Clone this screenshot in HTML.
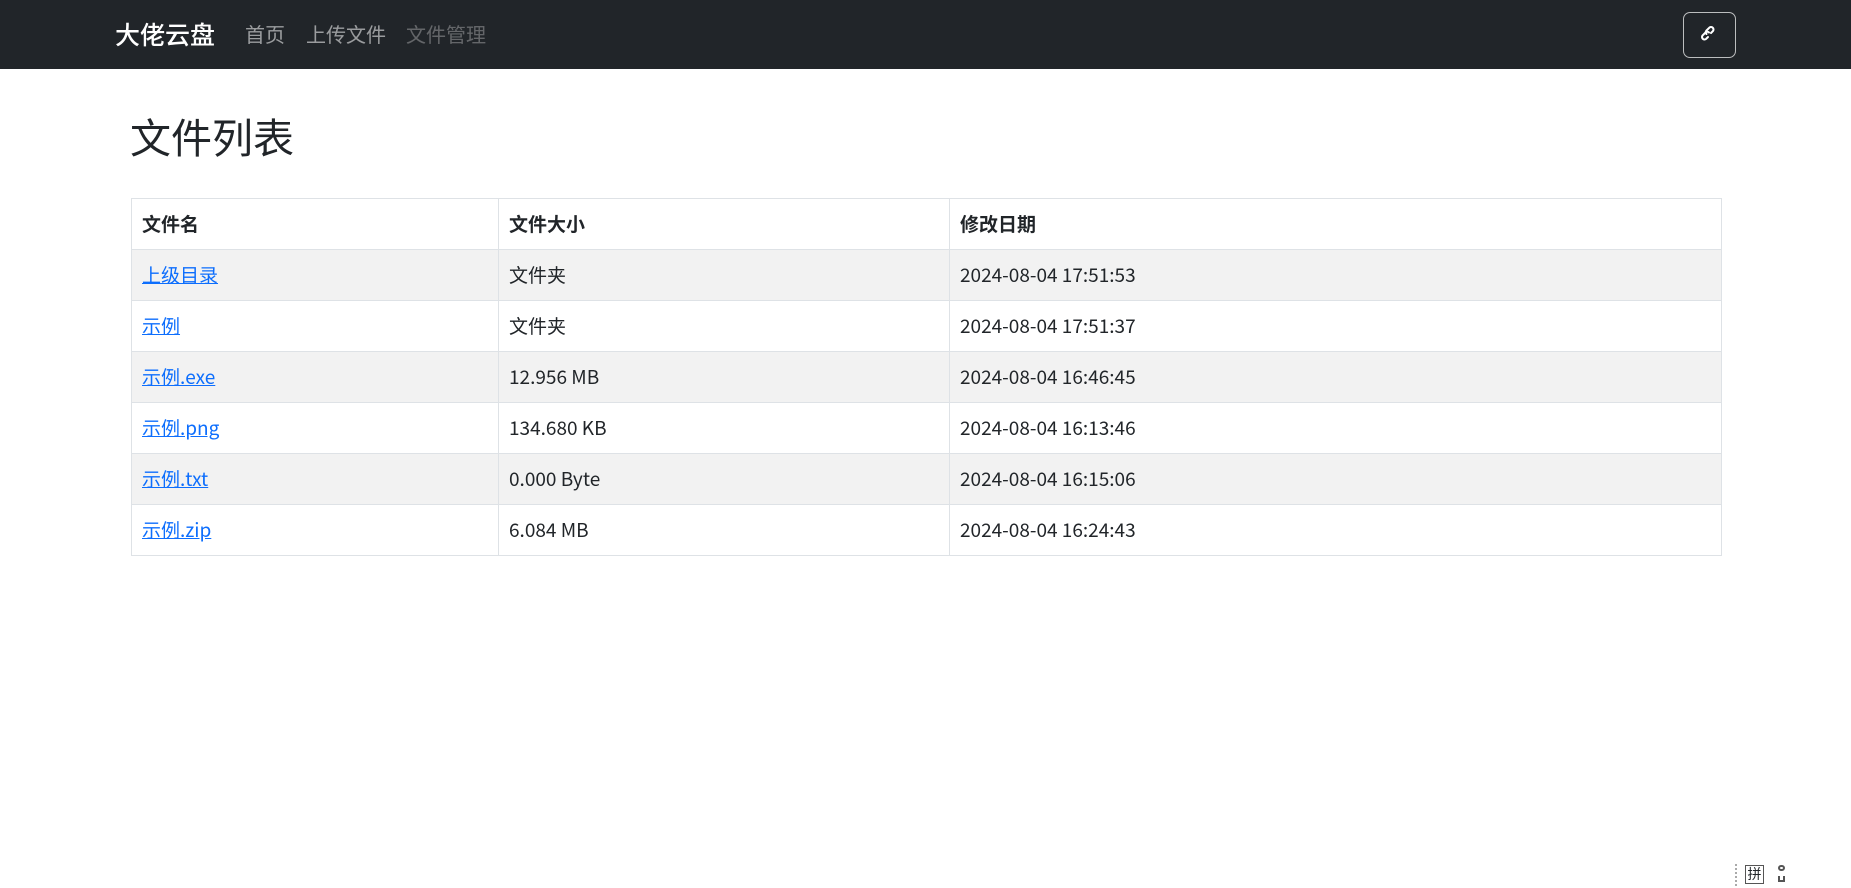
<!DOCTYPE html>
<html><head><meta charset="utf-8"><style>
*{box-sizing:border-box;margin:0;padding:0}
body{width:1851px;height:888px;background:#fff;font-family:"Noto Sans CJK SC",sans-serif;color:#212529;position:relative;overflow:hidden}
.nav{height:69px;background:#212529;position:relative}
.brand{position:absolute;left:115px;top:15px;font-size:25px;color:#fff;line-height:38px;font-weight:500}
.nl{position:absolute;top:18px;font-size:20px;line-height:32px;color:rgba(255,255,255,.55)}
.btn{position:absolute;left:1683px;top:12px;width:53px;height:46px;border:1px solid rgba(255,255,255,.7);border-radius:7px}
h1{position:absolute;left:130px;top:104px;font-size:41px;font-weight:400;line-height:62px}
table{position:absolute;left:131px;top:198px;width:1591px;border-collapse:collapse;font-size:19px}
td,th{border:1px solid #dee2e6;height:51px;padding:0 10px;text-align:left;vertical-align:middle;line-height:28px}
th{font-weight:700}
tr:nth-child(even) td{background:#f2f2f2}
a{color:#0d6efd;text-decoration:underline}
</style></head><body>
<div class="nav">
<div class="brand">大佬云盘</div>
<div class="nl" style="left:245px">首页</div>
<div class="nl" style="left:306px">上传文件</div>
<div class="nl" style="left:406px;color:rgba(255,255,255,.3)">文件管理</div>
<div class="btn"><svg width="53" height="46" viewBox="0 0 53 46" style="position:absolute;left:-1px;top:-1px"><g fill="none" stroke="#fff" stroke-width="2" stroke-linecap="round"><path d="M25 25l-2 2a2.5 2.5 0 0 1-3.5-3.5l3-3a2.5 2.5 0 0 1 3.5 0"/><path d="M28 21l2-2a2.5 2.5 0 0 0-3.5-3.5l-3 3a2.5 2.5 0 0 0 0 3.5"/></g></svg></div>
</div>
<h1>文件列表</h1>
<table>
<colgroup><col style="width:367px"><col style="width:451px"><col></colgroup>
<tr><th>文件名</th><th>文件大小</th><th>修改日期</th></tr>
<tr><td><a>上级目录</a></td><td>文件夹</td><td>2024-08-04 17:51:53</td></tr>
<tr><td><a>示例</a></td><td>文件夹</td><td>2024-08-04 17:51:37</td></tr>
<tr><td><a>示例.exe</a></td><td>12.956 MB</td><td>2024-08-04 16:46:45</td></tr>
<tr><td><a>示例.png</a></td><td>134.680 KB</td><td>2024-08-04 16:13:46</td></tr>
<tr><td><a>示例.txt</a></td><td>0.000 Byte</td><td>2024-08-04 16:15:06</td></tr>
<tr><td><a>示例.zip</a></td><td>6.084 MB</td><td>2024-08-04 16:24:43</td></tr>
</table>
<div style="position:absolute;left:1735px;top:864px;height:22px;border-left:2px dotted #aaa"></div>
<div style="position:absolute;left:1745px;top:865px;width:19px;height:19px;border:1px solid #555;font-size:14px;line-height:17px;text-align:center">拼</div>
<div style="position:absolute;left:1778px;top:865px;width:7px;height:6px;border:2px solid #555;border-radius:3px"></div>
<div style="position:absolute;left:1778px;top:876px;width:7px;height:6px;border:2px solid #555;border-top:none"></div>
</body></html>
